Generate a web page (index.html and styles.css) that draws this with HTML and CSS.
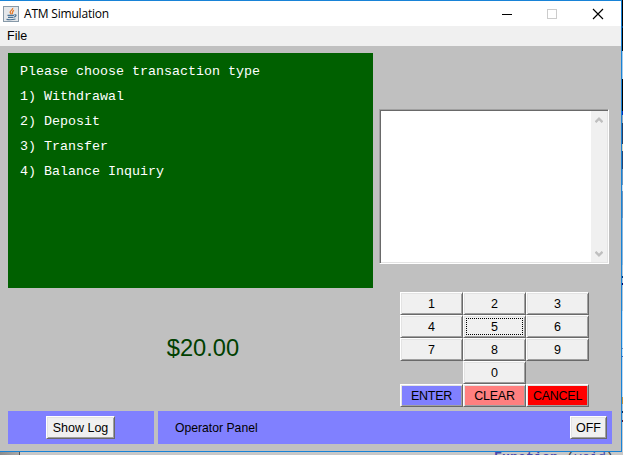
FILE: index.html
```html
<!DOCTYPE html>
<html lang="en">
<head>
<meta charset="utf-8">
<title>ATM Simulation</title>
<link rel="stylesheet" href="styles.css">
</head>
<body>
<div class="desktop">
  <div class="window">
    <header class="titlebar">
      <svg class="app-icon" width="16" height="16" viewBox="0 0 16 16">
        <rect x=".5" y=".5" width="15" height="15" fill="#e4e7ea" stroke="#8799a8"/>
        <path d="M9.700 2c.4 2-3.200 2.800-2.500 4.500.3.800 1 1.200.8 2M11 4.300C8.500 5.300 10.200 6.500 9 8" fill="none" stroke="#e87824" stroke-width="1.300"/>
        <path d="M4.500 9.300h6.500M5 11.300h5.500M3.500 13.300q4 1 9-.3M11.300 8.800c2.500-.5 2.200 1.700-.2 2.300" fill="none" stroke="#4a7396" stroke-width="1.200"/>
      </svg>
      <h1 class="title">ATM Simulation</h1>
      <svg class="controls" width="110" height="12" viewBox="0 0 110 12" fill="none" shape-rendering="crispEdges">
        <path d="M0 6.500h10" stroke="#000"/>
        <rect x="45.500" y="1.500" width="9" height="9" stroke="#ccc"/>
        <path d="M91 1l10 10M101 1L91 11" stroke="#000" stroke-width="1.150" shape-rendering="auto"/>
      </svg>
    </header>
    <nav class="menubar">File</nav>
    <main class="content">
      <div class="machine">
        <section class="left">
          <div class="screen">
            <p>Please choose transaction type</p>
            <p>1) Withdrawal</p>
            <p>2) Deposit</p>
            <p>3) Transfer</p>
            <p>4) Balance Inquiry</p>
          </div>
          <div class="amount">$20.00</div>
        </section>
        <section class="right">
          <div class="receipt">
            <div class="scrollbar">
              <svg width="8" height="6" viewBox="0 0 8 6"><path d="M.5 5.200L4 1.700 7.500 5.200" fill="none" stroke="#bfbfbf" stroke-width="2.400"/></svg>
              <svg width="8" height="6" viewBox="0 0 8 6"><path d="M.5.800L4 4.300 7.500.800" fill="none" stroke="#bfbfbf" stroke-width="2.400"/></svg>
            </div>
          </div>
          <div class="keypad">
            <button class="btn">1</button><button class="btn">2</button><button class="btn">3</button>
            <button class="btn">4</button><button class="btn focused">5</button><button class="btn">6</button>
            <button class="btn">7</button><button class="btn">8</button><button class="btn">9</button>
            <span></span><button class="btn">0</button><span></span>
            <button class="btn enter">ENTER</button><button class="btn clear">CLEAR</button><button class="btn cancel">CANCEL</button>
          </div>
        </section>
      </div>
      <footer class="panels">
        <div class="panel log"><button class="btn show-log">Show Log</button></div>
        <div class="panel operator"><span>Operator Panel</span><button class="btn off">OFF</button></div>
      </footer>
    </main>
  </div>
  <div class="side"></div>
  <div class="under"><span class="code"><b>Function</b> (<i>void</i>)</span></div>
</div>
</body>
</html>
```
FILE: styles.css
```css
* { box-sizing: border-box; }
body { margin: 0; font: 13px "Liberation Sans", Arial, sans-serif; color: #000; }
.desktop {
  display: grid;
  grid-template: 452px 3px / 622px 1px;
  width: 623px;
  height: 455px;
  overflow: hidden;
}
.window {
  display: flex;
  flex-direction: column;
  border: solid #1883d7;
  border-width: 1px 1px 1px 0;
  background: #c0c0c0;
}
.titlebar {
  display: flex;
  align-items: center;
  height: 25px;
  padding: 0 14px 0 3px;
  background: #fff;
}
.app-icon { flex: none; margin-top: 1px; }
.title {
  flex: 1;
  margin: 0 0 0 5px;
  font: 12px/25px "Open Sans", "Noto Sans", sans-serif;
  letter-spacing: -.2px;
}
.controls { flex: none; margin-right: -5px; }
.menubar { height: 20px; padding-left: 7px; line-height: 20px; font-size: 12.500px; background: #f0f0f0; }
.content {
  display: flex;
  flex: 1;
  flex-direction: column;
  justify-content: space-between;
  padding: 7px 9px 7px 8px;
}
.machine { display: flex; gap: 6px; }
.left { width: 365px; }
.screen {
  height: 235px;
  padding: 6px 12px;
  background: #006000;
  color: #fff;
  font: 13.333px/25px "Liberation Mono", monospace;
}
.screen p { margin: 0; }
.amount {
  margin-top: 45px;
  padding-left: 25px;
  color: #004000;
  font-size: 23.700px;
  line-height: 30px;
  text-align: center;
}
.right { width: 230px; padding-top: 56px; }
.receipt {
  display: flex;
  justify-content: flex-end;
  height: 155px;
  border: 1px solid;
  border-color: #a0a0a0 #fff #fff #a0a0a0;
  background: #fff;
  box-shadow: inset 1px 1px #696969, inset -1px -1px #e3e3e3;
}
.scrollbar {
  display: flex;
  flex-direction: column;
  justify-content: space-between;
  align-items: center;
  width: 16px;
  margin: 1px 1px 1px 0;
  padding: 6px 0 5px;
  background: #f0f0f0;
}
.keypad {
  display: grid;
  grid-template-columns: repeat(3, 63px);
  grid-auto-rows: 23px;
  margin: 28px 0 0 21px;
}
.btn {
  margin: 0;
  padding: 0;
  border: 1px solid;
  border-color: #fff #696969 #696969 #fff;
  background: #f0f0f0;
  box-shadow: inset 1px 1px #e3e3e3, inset -1px -1px #a0a0a0;
  color: #000;
  font: 12.500px/20px "Liberation Sans", Arial, sans-serif;
}
.focused { outline: 1px dotted #000; outline-offset: -4px; }
.enter { background: #8080ff; }
.clear { background: #ff8080; }
.cancel { background: #f00; }
.enter, .clear, .cancel { letter-spacing: -.25px; }
.panels { display: flex; gap: 4px; }
.panel { display: flex; align-items: center; height: 33px; background: #8080ff; }
.log { width: 146px; padding-left: 38px; }
.operator { width: 454px; justify-content: space-between; padding: 0 5px 0 17px; font-size: 12.200px; }
.show-log { width: 69px; height: 23px; }
.off { width: 37px; height: 23px; }
.side {
  background: linear-gradient(#000 26px, #003060 26px 28px, #000 28px 51px, #a9cbe8 51px 79px, #000 79px 111px, #0030c0 111px 115px, #98a7b5 115px 123px, #283d60 123px 144px, #d8d0b8 144px 151px, #284570 151px 169px, #6c94bc 169px 185px, #c7d9ea 185px 191px, #6c94bc 191px 218px, #8fb4d6 218px 265px, #b0c4d6 265px 276px, #003070 276px 278px, #b0c4d6 278px 283px, #000060 283px 285px, #b0c4d6 285px 311px, #c4e0f8 311px 348px, #6b86b8 348px 349px, #c4e0f8 349px 356px, #3860b0 356px 357px, #c4d8ec 357px 397px, #c09040 397px 404px, #b8c4d0 404px 411px, #102850 411px 413px, #b8c4d0 413px 420px, #501830 420px 422px, #c8ccd0 422px);
}
.under {
  grid-column: 1 / -1;
  overflow: hidden;
  padding-left: 494px;
  background: linear-gradient(90deg, #8c8c8c, #a8a8a8 19px, #555 19px 20px, #c8c8c8 20px);
}
.code { display: block; font: 13.333px/12px "Liberation Mono", monospace; color: #333; }
.code b, .code i { color: #4848a8; font-style: normal; }
```
